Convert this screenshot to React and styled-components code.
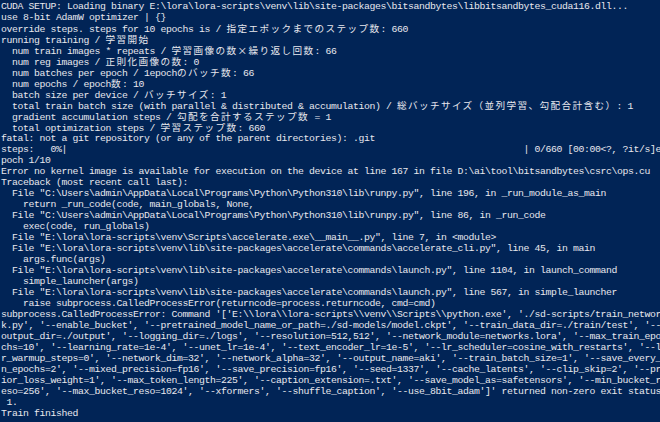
import React from "react";
import styled, { createGlobalStyle } from "styled-components";

const Global = createGlobalStyle`
  html, body { margin: 0; padding: 0; background: #012456; overflow: hidden; }
  #root { width: 660px; height: 422px; }
`;

const Terminal = styled.div`
  width: 660px;
  height: 422px;
  box-sizing: border-box;
  padding: 1px 0 0 1px;
  background: #012456;
  color: #e8e8ee;
  font-family: "Liberation Mono", "DejaVu Sans Mono", monospace;
  font-size: 9.8px;
  letter-spacing: -0.38px;
  overflow: hidden;
`;

const Line = styled.div`
  height: 11px;
  line-height: 11px;
  white-space: pre;
`;

const Wide = styled.span`
  font-family: "Noto Sans CJK JP", "Noto Sans CJK SC", sans-serif;
  font-size: 9.6px;
  letter-spacing: 1.4px;
  line-height: 11px;
`;

const progress = "steps:   0%|" + " ".repeat(83) + "| 0/660 [00:00<?, ?it/s]e";

const TEXT = String.raw`CUDA SETUP: Loading binary E:\lora\lora-scripts\venv\lib\site-packages\bitsandbytes\libbitsandbytes_cuda116.dll...
use 8-bit AdamW optimizer | {}
override steps. steps for 10 epochs is / 指定エポックまでのステップ数: 660
running training / 学習開始
  num train images * repeats / 学習画像の数×繰り返し回数: 66
  num reg images / 正則化画像の数: 0
  num batches per epoch / 1epochのバッチ数: 66
  num epochs / epoch数: 10
  batch size per device / バッチサイズ: 1
  total train batch size (with parallel & distributed & accumulation) / 総バッチサイズ（並列学習、勾配合計含む）: 1
  gradient accumulation steps / 勾配を合計するステップ数 = 1
  total optimization steps / 学習ステップ数: 660
fatal: not a git repository (or any of the parent directories): .git
@@PROGRESS@@
poch 1/10
Error no kernel image is available for execution on the device at line 167 in file D:\ai\tool\bitsandbytes\csrc\ops.cu
Traceback (most recent call last):
  File "C:\Users\admin\AppData\Local\Programs\Python\Python310\lib\runpy.py", line 196, in _run_module_as_main
    return _run_code(code, main_globals, None,
  File "C:\Users\admin\AppData\Local\Programs\Python\Python310\lib\runpy.py", line 86, in _run_code
    exec(code, run_globals)
  File "E:\lora\lora-scripts\venv\Scripts\accelerate.exe\__main__.py", line 7, in <module>
  File "E:\lora\lora-scripts\venv\lib\site-packages\accelerate\commands\accelerate_cli.py", line 45, in main
    args.func(args)
  File "E:\lora\lora-scripts\venv\lib\site-packages\accelerate\commands\launch.py", line 1104, in launch_command
    simple_launcher(args)
  File "E:\lora\lora-scripts\venv\lib\site-packages\accelerate\commands\launch.py", line 567, in simple_launcher
    raise subprocess.CalledProcessError(returncode=process.returncode, cmd=cmd)
subprocess.CalledProcessError: Command '['E:\\lora\\lora-scripts\\venv\\Scripts\\python.exe', './sd-scripts/train_networ
k.py', '--enable_bucket', '--pretrained_model_name_or_path=./sd-models/model.ckpt', '--train_data_dir=./train/test', '--
output_dir=./output', '--logging_dir=./logs', '--resolution=512,512', '--network_module=networks.lora', '--max_train_epo
chs=10', '--learning_rate=1e-4', '--unet_lr=1e-4', '--text_encoder_lr=1e-5', '--lr_scheduler=cosine_with_restarts', '--l
r_warmup_steps=0', '--network_dim=32', '--network_alpha=32', '--output_name=aki', '--train_batch_size=1', '--save_every_
n_epochs=2', '--mixed_precision=fp16', '--save_precision=fp16', '--seed=1337', '--cache_latents', '--clip_skip=2', '--pr
ior_loss_weight=1', '--max_token_length=225', '--caption_extension=.txt', '--save_model_as=safetensors', '--min_bucket_r
eso=256', '--max_bucket_reso=1024', '--xformers', '--shuffle_caption', '--use_8bit_adam']' returned non-zero exit status
 1.
Train finished`;

const LINES = TEXT.split("\n").map((l) => (l === "@@PROGRESS@@" ? progress : l));

const WIDE_RE = /([\u00d7\u3000-\u30ff\u3400-\u9fff\uff01-\uff60]+)/;

function renderLine(text) {
  return text.split(WIDE_RE).map((part, i) =>
    i % 2 === 1 ? <Wide key={i}>{part}</Wide> : part
  );
}

export default function App() {
  return (
    <>
      <Global />
      <Terminal>
        {LINES.map((l, i) => (
          <Line key={i}>{renderLine(l)}</Line>
        ))}
      </Terminal>
    </>
  );
}
